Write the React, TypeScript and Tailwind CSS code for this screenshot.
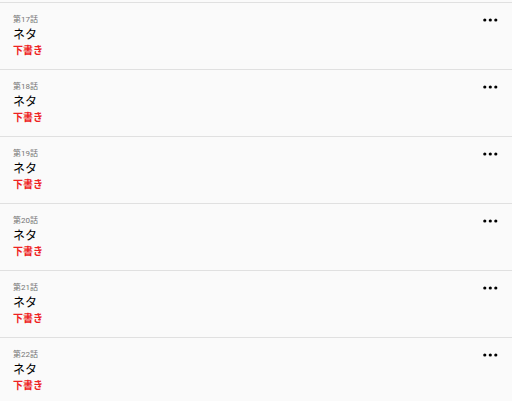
const episodes = [17, 18, 19, 20, 21, 22];

function MoreDots() {
  return (
    <svg width="15" height="4" viewBox="0 0 15 4" className="text-black">
      <circle cx="1.8" cy="2" r="1.6" fill="currentColor" />
      <circle cx="7.3" cy="2" r="1.6" fill="currentColor" />
      <circle cx="12.8" cy="2" r="1.6" fill="currentColor" />
    </svg>
  );
}

export default function App() {
  return (
    <div
      className="w-[512px] h-[401px] overflow-hidden bg-[#fafafa]"
      style={{ fontFamily: 'Roboto, "Noto Sans CJK JP", sans-serif' }}
    >
      <div className="h-[3px] border-b border-[#e0e0e0]" />
      {episodes.map((n) => (
        <div key={n} className="relative h-[67px] border-b border-[#e0e0e0] pl-[13px] pt-[11px]">
          <div className="text-[8px] leading-[11px] text-[#757575]">第{n}話</div>
          <div className="text-[12px] leading-[16px] text-black mt-[2px]">ネタ</div>
          <div className="text-[10px] leading-[14px] font-bold text-[#ee2222] mt-[1px]">下書き</div>
          <div className="absolute right-[14px] top-[15px]">
            <MoreDots />
          </div>
        </div>
      ))}
    </div>
  );
}
